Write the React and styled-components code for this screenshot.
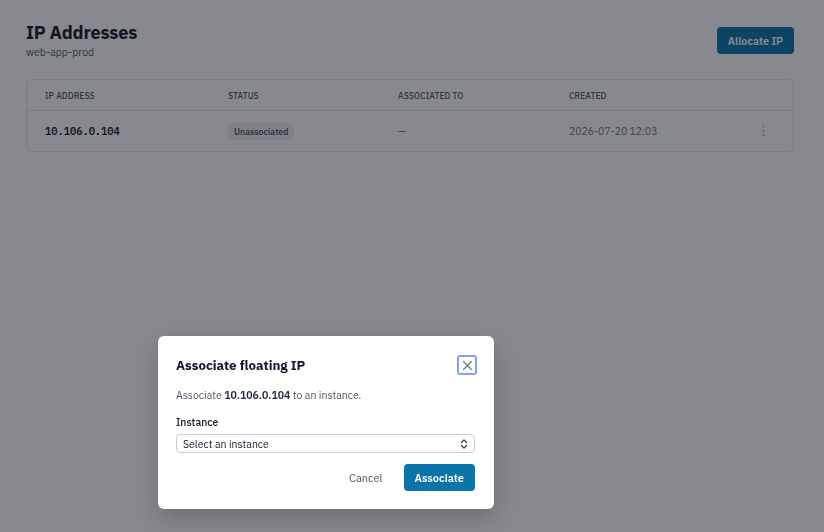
import React from 'react';
import styled, { createGlobalStyle } from 'styled-components';

const GlobalStyle = createGlobalStyle`
  html, body {
    margin: 0;
    background: #ffffff;
    font-family: "IBM Plex Sans", Inter, "Liberation Sans", sans-serif;
    color: #111827;
  }
`;

const Page = styled.div`
  padding: 20px 30px 0 26px;
  min-height: 532px;
  box-sizing: border-box;
`;

const Header = styled.div`
  display: flex;
  justify-content: space-between;
  align-items: flex-start;
  margin-bottom: 20px;
`;

const Title = styled.h1`
  margin: 0;
  font-size: 18.2px;
  line-height: 24px;
  font-weight: 700;
  letter-spacing: -0.2px;
  color: #111827;
`;

const Subtitle = styled.div`
  margin-top: 1px;
  font-size: 10.5px;
  color: #4b5563;
`;

const Button = styled.button`
  height: 27px;
  padding: 0 11px;
  border: none;
  border-radius: 4px;
  font-family: inherit;
  font-size: 11px;
  font-weight: ${p => (p.$variant === 'ghost' ? 400 : 600)};
  cursor: pointer;
  background: ${p => (p.$variant === 'ghost' ? 'transparent' : '#0b74a8')};
  color: ${p => (p.$variant === 'ghost' ? '#4b5563' : '#ffffff')};
`;

const HeaderButton = styled(Button)`
  margin-top: 7px;
  font-size: 10.8px;
`;

const Card = styled.div`
  border: 1px solid #e5e7eb;
  border-radius: 6px;
  overflow: hidden;
`;

const Row = styled.div`
  display: grid;
  grid-template-columns: 183px 170px 171px 1fr 60px;
  align-items: center;
  padding-left: 18px;
  height: ${p => (p.$head ? '30px' : '40px')};
  border-top: ${p => (p.$head ? 'none' : '1px solid #e5e7eb')};
`;

const HeadCell = styled.div`
  font-size: 8.5px;
  font-weight: 500;
  text-transform: uppercase;
  letter-spacing: 0.1px;
  color: #4b5563;
`;

const Mono = styled.div`
  font-family: "IBM Plex Mono", "DejaVu Sans Mono", "Liberation Mono", monospace;
  font-size: 10.4px;
  font-weight: 600;
  color: #111827;
`;

const Cell = styled.div`
  display: flex;
  align-items: center;
`;

const Badge = styled.span`
  padding: 3px 6px;
  border-radius: 7px;
  background: #eceef1;
  font-size: 8.8px;
  line-height: 11px;
  font-weight: 500;
  color: #374151;
`;

const Muted = styled.div`
  font-size: 10.4px;
  color: #6b7280;
`;

const Kebab = styled.div`
  display: flex;
  justify-content: center;
`;

const Overlay = styled.div`
  position: fixed;
  inset: 0;
  background: rgba(17, 20, 30, 0.5);
`;

const Dialog = styled.div`
  position: absolute;
  left: 158px;
  top: 336px;
  width: 336px;
  box-sizing: border-box;
  padding: 18px 18px 18px;
  background: #ffffff;
  border-radius: 6px;
  box-shadow: 0 10px 25px rgba(0, 0, 0, 0.2);
`;

const DialogHead = styled.div`
  display: flex;
  justify-content: space-between;
  align-items: center;
`;

const DialogTitle = styled.h2`
  margin: 0;
  font-size: 13.3px;
  line-height: 22px;
  font-weight: 700;
  color: #111827;
`;

const CloseButton = styled.button`
  width: 20px;
  height: 20px;
  margin-right: -1px;
  padding: 0;
  display: flex;
  align-items: center;
  justify-content: center;
  border: 2px solid #7ea6f4;
  border-radius: 3px;
  background: #fff;
`;

const Description = styled.p`
  margin: 12px 0 0;
  font-size: 10.5px;
  color: #4b5563;
  b {
    font-weight: 600;
    color: #1f2937;
  }
`;

const Label = styled.div`
  margin-top: 13px;
  font-size: 10.5px;
  font-weight: 500;
  color: #111827;
`;

const Select = styled.div`
  margin-top: 5px;
  margin-right: 1px;
  height: 19px;
  box-sizing: border-box;
  display: flex;
  align-items: center;
  justify-content: space-between;
  padding: 0 6px;
  border: 1px solid #c9ccd1;
  border-radius: 4px;
  font-size: 10.5px;
  color: #111827;
`;

const Footer = styled.div`
  margin-top: 11px;
  padding-right: 1px;
  display: flex;
  justify-content: flex-end;
  gap: 10px;
`;

const Chevrons = () => (
  <svg width="8" height="10" viewBox="0 0 8 10" fill="none" stroke="#374151" strokeWidth="1.2" strokeLinecap="round" strokeLinejoin="round">
    <path d="M1.5 3.5 L4 1 L6.5 3.5" />
    <path d="M1.5 6.5 L4 9 L6.5 6.5" />
  </svg>
);

const DotsIcon = () => (
  <svg width="3" height="12" viewBox="0 0 3 12" fill="#9ca3af">
    <circle cx="1.5" cy="1.5" r="0.9" />
    <circle cx="1.5" cy="6" r="0.9" />
    <circle cx="1.5" cy="10.5" r="0.9" />
  </svg>
);

const XIcon = () => (
  <svg width="11" height="11" viewBox="0 0 11 11" stroke="#6b7280" strokeWidth="1.1" strokeLinecap="round">
    <path d="M1.5 1.5 L9.5 9.5 M9.5 1.5 L1.5 9.5" />
  </svg>
);

const ips = [
  { address: '10.106.0.104', status: 'Unassociated', target: '—', created: '2026-07-20 12:03' },
];

export default function App() {
  return (
    <>
      <GlobalStyle />
      <Page>
        <Header>
          <div>
            <Title>IP Addresses</Title>
            <Subtitle>web-app-prod</Subtitle>
          </div>
          <HeaderButton>Allocate IP</HeaderButton>
        </Header>
        <Card>
          <Row $head>
            <HeadCell>IP Address</HeadCell>
            <HeadCell>Status</HeadCell>
            <HeadCell>Associated to</HeadCell>
            <HeadCell>Created</HeadCell>
            <HeadCell />
          </Row>
          {ips.map(ip => (
            <Row key={ip.address}>
              <Mono>{ip.address}</Mono>
              <Cell><Badge>{ip.status}</Badge></Cell>
              <Muted>{ip.target}</Muted>
              <Muted>{ip.created}</Muted>
              <Kebab><DotsIcon /></Kebab>
            </Row>
          ))}
        </Card>
      </Page>
      <Overlay>
        <Dialog>
          <DialogHead>
            <DialogTitle>Associate floating IP</DialogTitle>
            <CloseButton aria-label="Close"><XIcon /></CloseButton>
          </DialogHead>
          <Description>
            Associate <b>10.106.0.104</b> to an instance.
          </Description>
          <Label>Instance</Label>
          <Select>
            <span>Select an instance</span>
            <Chevrons />
          </Select>
          <Footer>
            <Button $variant="ghost">Cancel</Button>
            <Button>Associate</Button>
          </Footer>
        </Dialog>
      </Overlay>
    </>
  );
}
